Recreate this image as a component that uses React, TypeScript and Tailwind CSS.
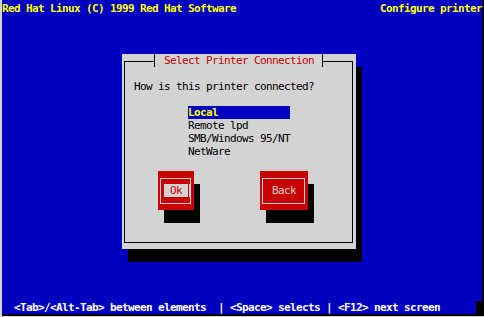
const mono = "font-['DejaVu_Sans_Mono','Liberation_Mono',monospace] text-[11px] tracking-[-0.6226px] leading-[13px]";

const items = ['Local', 'Remote lpd', 'SMB/Windows 95/NT', 'NetWare'];

const Tee = ({ side }: { side: 'left' | 'right' }) => (
  <div className="relative w-[6px] h-[13px] bg-[#d3d3d3]">
    <div className="absolute left-[2px] top-0 w-px h-[13px] bg-black" />
    {side === 'left' ? (
      <div className="absolute left-0 top-[7px] w-[3px] h-px bg-black" />
    ) : (
      <div className="absolute left-[2px] top-[7px] w-[4px] h-px bg-black" />
    )}
  </div>
);

const Button = ({ label, width, focused }: { label: string; width: string; focused?: boolean }) => (
  <div className={`relative ${width} h-[39px] bg-[#c80000] shadow-[6px_13px_0_0_#000]`}>
    <div className="absolute left-[2px] right-[3px] top-[7px] bottom-[6px] border border-[#d3d3d3]" />
    {focused ? (
      <>
        <div className="absolute left-[6px] top-[13px] w-[24px] h-[13px] bg-[#d3d3d3] text-[#c80000] whitespace-pre">{' ' + label + ' '}</div>
        <div className="absolute left-[31px] top-[13px] w-[2px] h-[13px] bg-[#d3d3d3]" />
      </>
    ) : (
      <div className="absolute left-[12px] top-[13px] h-[13px] text-[#d3d3d3]">{label}</div>
    )}
  </div>
);

const App = () => {
  return (
    <div className={`w-[484px] h-[317px] bg-black border-l-2 border-l-[#d4d4d4] border-b border-b-[#cfcfcf] ${mono}`}>
      <div className="w-[480px] h-[314px] bg-[#0000c0] pt-[2px] flex flex-col">
        <div className="flex justify-between h-[13px] text-[#ffff00] font-bold">
          <span>Red Hat Linux (C) 1999 Red Hat Software</span>
          <span>Configure printer</span>
        </div>

        <div className="relative ml-[120px] mt-[39px] w-[234px] h-[195px] bg-[#d3d3d3] shadow-[6px_13px_0_0_#000]">
          <div className="absolute left-[2px] right-[3px] top-[7px] bottom-[6px] border border-black" />
          <div className="absolute left-[30px] top-0 flex bg-[#d3d3d3] text-[#c80000]">
            <Tee side="left" />
            <span className="whitespace-pre">{' Select Printer Connection '}</span>
            <Tee side="right" />
          </div>

          <div className="relative flex flex-col pt-[26px] pl-[12px] text-black">
            <div className="h-[13px]">How is this printer connected?</div>
            <div className="mt-[13px] ml-[54px] w-[102px] flex flex-col">
              {items.map((item, i) => (
                <div
                  key={item}
                  className={i === 0 ? 'h-[13px] bg-[#0000c0] text-[#ffff00] font-bold' : 'h-[13px]'}
                >
                  {item}
                </div>
              ))}
            </div>
            <div className="mt-[13px] ml-[24px] flex gap-[66px]">
              <Button label="Ok" width="w-[36px]" focused />
              <Button label="Back" width="w-[48px]" />
            </div>
          </div>
        </div>

        <div className="mt-auto flex h-[13px]">
          <div className="w-[474px] pl-[12px] text-white font-bold whitespace-pre">
            {'<Tab>/<Alt-Tab> between elements  | <Space> selects | <F12> next screen'}
          </div>
          <div className="w-[6px] bg-black" />
        </div>
      </div>
    </div>
  );
};

export default App;
